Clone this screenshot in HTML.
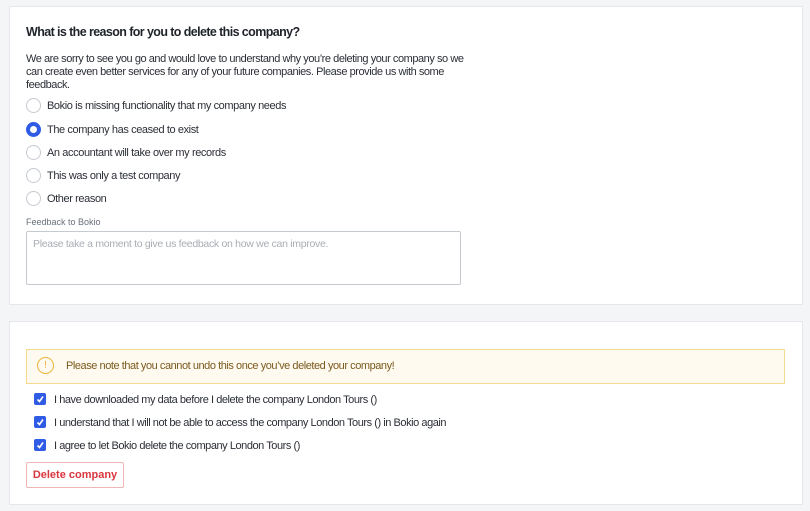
<!DOCTYPE html>
<html><head><style>
body{margin:0;width:810px;height:511px;background:#f4f5f7;font-family:"Liberation Sans",sans-serif;color:#2b2f36;position:relative;overflow:hidden}
.card{position:absolute;left:9px;width:792px;background:#fff;border:1px solid #e4e7ec}
.a{position:absolute;white-space:nowrap}
.r{position:absolute;left:26px;width:13px;height:13px;border:1px solid #c5c9d0;border-radius:50%;background:#fff}
.r.on{border:4px solid #2f5be5;width:7px;height:7px}
.rt{position:absolute;left:47px;font-size:11px;letter-spacing:-0.4px}
.cb{position:absolute;left:34px;width:12px;height:12px;background:#2f5be5;border-radius:2px}
.ct{position:absolute;left:54px;font-size:11px;letter-spacing:-0.45px}
</style></head><body>
<div class="card" style="top:6px;height:297px"></div>
<div class="card" style="top:321px;height:182px"></div>
<div class="a" style="left:26px;top:25px;font-size:12.5px;letter-spacing:-0.6px;font-weight:bold;color:#1f2329">What is the reason for you to delete this company?</div>
<div class="a" style="left:26px;top:53px;font-size:11px;letter-spacing:-0.45px;line-height:13px;white-space:normal;width:445px">We are sorry to see you go and would love to understand why you’re deleting your company so we can create even better services for any of your future companies. Please provide us with some feedback.</div>
<div class="r" style="top:98px"></div><div class="rt" style="top:100px">Bokio is missing functionality that my company needs</div>
<div class="r on" style="top:122px"></div><div class="rt" style="top:124px">The company has ceased to exist</div>
<div class="r" style="top:145px"></div><div class="rt" style="top:147px">An accountant will take over my records</div>
<div class="r" style="top:168px"></div><div class="rt" style="top:170px">This was only a test company</div>
<div class="r" style="top:191px"></div><div class="rt" style="top:193px">Other reason</div>
<div class="a" style="left:26px;top:217px;font-size:9px;color:#6b7079">Feedback to Bokio</div>
<div class="a" style="left:26px;top:231px;width:433px;height:52px;border:1px solid #c5c9d0;border-radius:2px"></div>
<div class="a" style="left:33px;top:238px;font-size:10.5px;letter-spacing:-0.3px;color:#a9adb4">Please take a moment to give us feedback on how we can improve.</div>
<div class="a" style="left:26px;top:349px;width:757px;height:33px;background:#fffaef;border:1px solid #f5d98e"></div>
<div class="a" style="left:37px;top:357px;width:15px;height:15px;border:1.5px solid #f0b43b;border-radius:50%;color:#f0b43b;font-size:10px;text-align:center;line-height:15px">!</div>
<div class="a" style="left:66px;top:360px;font-size:11px;letter-spacing:-0.45px;color:#7a5a1e">Please note that you cannot undo this once you’ve deleted your company!</div>
<div class="cb" style="top:393px"></div><div class="ct" style="top:394px">I have downloaded my data before I delete the company London Tours ()</div>
<div class="cb" style="top:416px"></div><div class="ct" style="top:417px">I understand that I will not be able to access the company London Tours () in Bokio again</div>
<div class="cb" style="top:439px"></div><div class="ct" style="top:440px">I agree to let Bokio delete the company London Tours ()</div>
<svg class="a" style="left:34px;top:393px" width="12" height="60"><g fill="none" stroke="#fff" stroke-width="1.6"><path d="M3.5 6.5l2 2 3.5-5"/><path d="M3.5 29.5l2 2 3.5-5"/><path d="M3.5 52.5l2 2 3.5-5"/></g></svg>
<div class="a" style="left:26px;top:462px;width:96px;height:24px;border:1px solid #f0b5b5;border-radius:2px;color:#d9363e;font-weight:bold;font-size:11px;text-align:center;line-height:24px">Delete company</div>
</body></html>
